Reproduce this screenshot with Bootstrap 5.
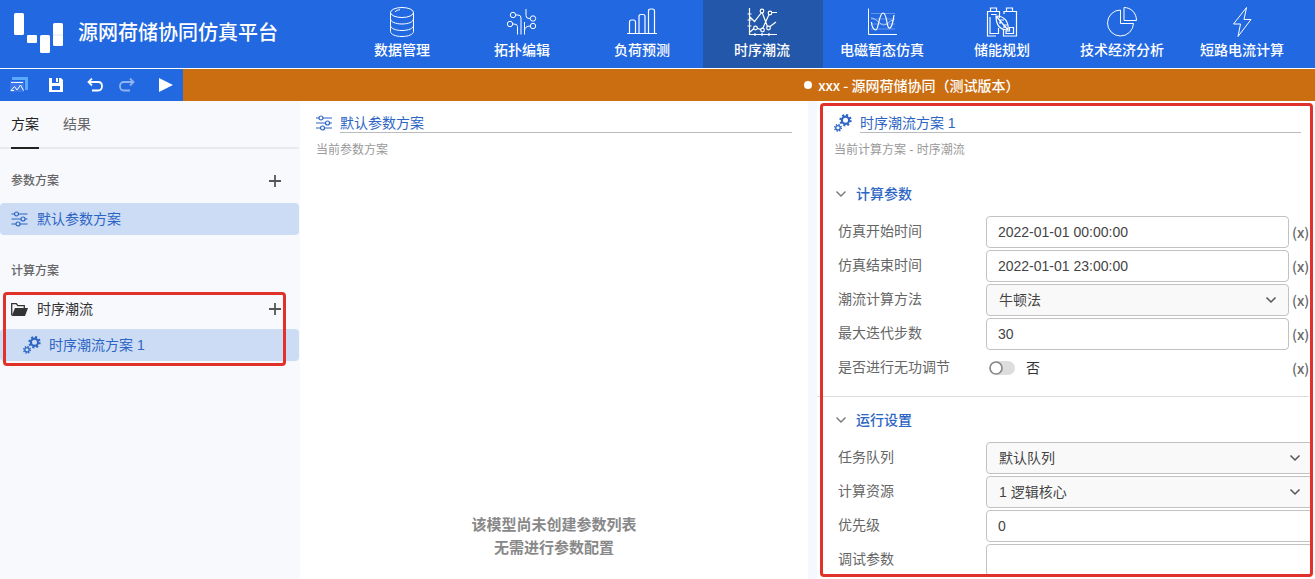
<!DOCTYPE html>
<html lang="zh-CN">
<head>
<meta charset="utf-8">
<meta name="viewport" content="width=device-width, initial-scale=1">
<title>源网荷储协同仿真平台</title>
<link href="https://cdn.jsdelivr.net/npm/bootstrap@5.3.0/dist/css/bootstrap.min.css" rel="stylesheet">
<style>
  :root { --app-blue: #2168e1; --app-link: #2d65c4; --app-side: #f8f9fd; --app-select: #ccdcf5; --app-mark: #e0322b; }
  body { font-family: "Liberation Sans", "Noto Sans CJK SC", sans-serif; font-size: 14px; line-height: 20px; color: #333; background: #fff; }
  svg { display: block; flex: none; fill: none; stroke: currentColor; }
  a { text-decoration: none; }

  .app-head { height: 69px; background: var(--app-blue); border-bottom: 1px solid #fff; }
  .app-brand { width: 343px; padding: 0 0 2px 13px; font-size: 20px; font-weight: 500; gap: 14px; }
  .app-modules .nav-link { width: 120px; height: 68px; padding: 6px 2px 0 0; color: #fff; font-weight: 500; font-size: 14px; border-radius: 0; }
  .app-modules .nav-link.active { background: #2257a9; }
  .app-modules svg { margin-bottom: 2px; }

  .app-bar { height: 32px; background: #cb6e11; }
  .app-tools { width: 183px; background: var(--app-blue); padding-left: 9px; }
  .app-tools button, .bare-btn { border: 0; background: none; padding: 0; color: inherit; }
  .lead-space { flex: 618; } .tail-space { flex: 294; }
  .file-name { font-family: "Noto Sans CJK SC", sans-serif; font-weight: 500; }
  .file-dot { width: 8px; height: 8px; margin-right: 6px; }

  .app-main { display: grid; grid-template-columns: 300px 51fr 9px 50fr; min-height: 0; }
  .side { background: var(--app-side); padding-right: 1px; }
  .side-tabs { height: 48px; border-bottom: 2px solid #e9eaed; padding-left: 11px; gap: 24px; }
  .side-tabs .nav-link { padding: 13px 0; height: 48px; color: #666; }
  .side-tabs .nav-link.active { color: #222; border-bottom: 2px solid #222; }
  .side-title { font-size: 12px; font-weight: 500; color: #666; height: 32px; margin-bottom: 6px; padding: 0 18px 0 11px; }
  .side-title.second { margin: 20px 0 6px; }
  .side-item { height: 32px; padding: 0 18px 0 11px; gap: 9px; color: #333; border-radius: 4px; }
  .side-item.picked { background: var(--app-select); color: var(--app-link); }
  .side-item.nested { padding-left: 23px; margin-top: 4px; gap: 8px; }
  .plus { color: #555; }
  .mark-frame { position: absolute; border: 3px solid var(--app-mark); border-radius: 4px; pointer-events: none; z-index: 2; }
  .side-mark { inset: -1px 13px -5px 3px; }
  .panel-mark { inset: 2px 2px 2px 3px; }

  .panel-head { padding: 11px 16px 0; }
  .name-line { color: var(--app-link); }
  .name-field { font-size: 14px; line-height: 20px; height: 21px; color: inherit; border: 0; border-bottom: 1px solid #bbb; border-radius: 0; padding: 0; background: none; }
  .panel-note { font-size: 12px; color: #999; margin: 7px 0 0; }
  .empty-note { font-size: 15px; line-height: 23px; font-weight: 700; color: #888; padding-bottom: 20px; }
  .gutter { background: #f6f8fd; }

  .setup { padding-right: 6px; }
  .setup .panel-head { padding: 11px 8px 11px 17px; }
  .fold { height: 45px; padding-left: 18px; gap: 9px; color: var(--app-link); font-weight: 500; font-size: 14px; }
  .fold svg { color: #777; }
  .fields { padding-left: 21px; gap: 2px; }
  .fields.wide { margin-right: -4px; }
  .field-row { height: 32px; }
  .field-row > label:first-child { width: 148px; flex: none; color: #666; padding-bottom: 2px; }
  .field-row .form-control, .field-row .form-select { height: 32px; font-size: 14px; line-height: 20px; color: #444; border: 1px solid #c2c2c2; border-radius: 4px; padding: 4px 11px 5px; }
  .field-row .form-select { padding-left: 12px; background-color: #f9f9f9; background-size: 12px 12px; background-position: right 11px center;
    background-image: url("data:image/svg+xml,%3csvg xmlns='http://www.w3.org/2000/svg' viewBox='0 0 12 12'%3e%3cpath fill='none' stroke='%23555' stroke-width='1.5' d='M1.5 3.5 6 8l4.500-4.500'/%3e%3c/svg%3e"); }
  .var-btn { width: 17px; margin-left: 3px; flex: none; font-family: "Noto Sans CJK SC", sans-serif; font-weight: 500; }
  .var-btn.bare-btn { color: #666; }
  .switch-input.form-check-input { width: 26px; height: 14px; margin: 0 11px 0 3px; border: 0; border-radius: 7px; background-color: #ddd; background-repeat: no-repeat; background-size: 14px 14px; background-position: left center;
    background-image: url("data:image/svg+xml,%3csvg xmlns='http://www.w3.org/2000/svg' viewBox='0 0 14 14'%3e%3ccircle cx='7' cy='7' r='6' fill='white' stroke='%23888' stroke-width='1.7'/%3e%3c/svg%3e"); }
  .switch-input.form-check-input:checked { background-position: right center; background-color: var(--app-blue); }
  .parting { height: 1px; background: #ddd; margin-top: 12px; }
</style>
</head>
<body class="vh-100 overflow-hidden d-flex flex-column">
<svg width="0" height="0" class="position-absolute" aria-hidden="true">
  <symbol id="i-sliders" viewBox="0 0 16 16"><g fill="none" stroke="currentColor" stroke-width="1.200"><path d="M0 3h3m4 0h9M0 8h9.500m4 0H16M0 13h4.500m4 0H16"/><circle cx="5" cy="3" r="2"/><circle cx="11.500" cy="8" r="2"/><circle cx="6.500" cy="13" r="2"/></g></symbol>
  <symbol id="i-gears" viewBox="0 0 18 18"><g fill="none" stroke="currentColor"><circle cx="11.500" cy="6.200" r="3.600" stroke-width="2.200"/><circle cx="11.500" cy="6.200" r="5.200" stroke-width="2" stroke-dasharray="2.040 2.040"/><circle cx="4" cy="13.800" r="2.200" stroke-width="1.300"/><circle cx="4" cy="13.800" r="3.400" stroke-width="1.300" stroke-dasharray="1.340 1.330"/></g></symbol>
  <symbol id="i-plus" viewBox="0 0 12 12"><path fill="none" stroke="currentColor" stroke-width="1.800" d="M6 0v12M0 6h12"/></symbol>
  <symbol id="i-down" viewBox="0 0 12 12"><path fill="none" stroke="currentColor" stroke-width="1.400" d="M1.500 3.500 6 8l4.500-4.500"/></symbol>
</svg>

<header class="app-head d-flex text-white flex-shrink-0 overflow-hidden">
  <div class="app-brand d-flex align-items-center flex-shrink-0">
    <svg width="51" height="42" viewBox="0 0 51 42"><g fill="#fff" stroke="none"><rect x="1" y="1" width="10" height="22" rx="1.500"/><rect x="14" y="23" width="10" height="8" rx="1"/><rect x="27" y="23" width="10" height="18" rx="1.500"/><rect x="40" y="11" width="10" height="23" rx="1.500"/></g><path d="M40 23h10" stroke="#c5d7f7" stroke-width=".6"/></svg>
    <span>源网荷储协同仿真平台</span>
  </div>
  <nav class="app-modules nav flex-nowrap">
    <a class="nav-link d-flex flex-column align-items-center" href="#"><svg width="32" height="32" viewBox="0 0 32 32"><ellipse cx="16" cy="6.500" rx="11.500" ry="5"/><path d="M4.500 6.500v19c0 2.800 5 5 11.500 5s11.500-2.200 11.500-5v-19M4.500 13c0 2.800 5 5 11.500 5s11.500-2.200 11.500-5M4.500 19.500c0 2.800 5 5 11.500 5s11.500-2.200 11.500-5M9 6c1-1.500 3-2 5-2.300"/></svg>数据管理</a>
    <a class="nav-link d-flex flex-column align-items-center" href="#"><svg width="32" height="32" viewBox="0 0 32 32"><circle cx="7" cy="9" r="2.700"/><circle cx="4" cy="18" r="2.700"/><circle cx="27" cy="12.500" r="2.700"/><circle cx="27" cy="20" r="2.700"/><path d="M9.700 9H12q3 0 3 3v16.500M6.700 18H8q3.500 0 3.500 2.500v8M20 3v6.500q0 3 3 3h1.500M18.500 28.500V16M18.500 25q0-5 6-5"/></svg>拓扑编辑</a>
    <a class="nav-link d-flex flex-column align-items-center" href="#"><svg width="32" height="32" viewBox="0 0 32 32" stroke-width="1.200"><path d="M1 27.500h30M3.500 27.500V16q0-2 2-2h2q2 0 2 2v11.500M13 27.500v-17q0-2 2-2h2q2 0 2 2v17M22.500 27.500V5q0-2 2-2h2q2 0 2 2v22.500"/></svg>负荷预测</a>
    <a class="nav-link active d-flex flex-column align-items-center" href="#"><svg width="32" height="32" viewBox="0 0 32 32" stroke-width="1.200"><path d="M3.500 2v26.500H31M1.500 8h4M1.500 14h4M1.500 20h4M9 27v3M16 27v3M23 27v3M4 11l4.500 4.500L16 6l6 16 8-6M4 26l5-4.500 7 2.500 7-15.500 2-2h6"/><g fill="#2257a9"><circle cx="16" cy="5" r="1.800"/><circle cx="9.500" cy="22" r="1.800"/><circle cx="16.500" cy="24" r="1.800"/><circle cx="24" cy="7" r="1.800"/><circle cx="22.500" cy="22" r="1.800"/></g></svg>时序潮流</a>
    <a class="nav-link d-flex flex-column align-items-center" href="#"><svg width="32" height="32" viewBox="0 0 32 32"><path d="M2.500 2.500v26H31"/><path d="M5 7.500h24M5 13h24M5 18h24M5 23h24" stroke-width=".5" opacity=".6"/><path d="M5.500 16c0 4 2 8 4.500 8S13 7 17 7s3.500 14 6 15 4-6 5-13" stroke-width="1.200"/><path d="M5 12c5 0 9 7 13 7s5-5 10-5" stroke-width=".6"/></svg>电磁暂态仿真</a>
    <a class="nav-link d-flex flex-column align-items-center" href="#"><svg width="32" height="32" viewBox="0 0 32 32" stroke-width="1.200"><path d="M4.500 5.500V2h6v3.500M20.500 5.500V2h6v3.500M10 30H1.500V5.500h12V12M18 8V5.500h12.500V30h-13v-7M5 8.500h5.500M4 11v16.500h8.500V22M27.500 21.500h-4V25H20v2.500h7.500z"/><path d="M10 10c8 0 13 5 12 14-8 0-12-5-12-14zM10 10l12 14M14 14v4M14 14h4M18 19v3M18 19h3"/></svg>储能规划</a>
    <a class="nav-link d-flex flex-column align-items-center" href="#"><svg width="32" height="32" viewBox="0 0 32 32"><path d="M14.500 4a13 13 0 1 0 13 13.500h-13z"/><path d="M18 1.500v13h12.500C30.500 7 25 1.500 18 1.500z"/></svg>技术经济分析</a>
    <a class="nav-link d-flex flex-column align-items-center" href="#"><svg width="32" height="32" viewBox="0 0 32 32"><path d="M20.500 1.500 7.500 18h7l-2.500 12.500L25 13.500h-7z" stroke-linejoin="round"/></svg>短路电流计算</a>
  </nav>
</header>

<div class="app-bar d-flex text-white flex-shrink-0">
  <div class="app-tools d-flex align-items-center flex-shrink-0">
    <button type="button" aria-label="应用"><svg width="20" height="18" viewBox="0 0 20 18"><path d="M3 1h16v13h-3V4H3z" fill="#59aaff" stroke="none"/><path d="M1 5h14v11H1z" fill="#3c78ec" stroke="none"/><path d="M2 6.500h12M2 14.500l3.500-4L8 14l3.500-5 3 5.500M2 14.500h3" stroke="#fff"/></svg></button>
    <button type="button" aria-label="保存" class="ms-3 ps-1"><svg width="14" height="14" viewBox="0 0 14 14"><path fill="#fff" stroke="none" fill-rule="evenodd" d="M0 0h3v5h7V0h2l2 2v12H0zM7 0h2v4H7zM3 8v4h8V8z"/></svg></button>
    <button type="button" aria-label="撤销" class="ms-4"><svg width="16" height="14" viewBox="0 0 16 14" stroke-width="1.800"><path d="M1.500 4H11q4 0 4 4.200T11 12.500H5M5 .5 1.500 4 5 7.500"/></svg></button>
    <button type="button" aria-label="重做" class="ms-3 opacity-50"><svg width="16" height="14" viewBox="0 0 16 14" stroke-width="1.800"><path d="M14.500 4H5Q1 4 1 8.200t4 4.300h6M11 .5 14.500 4 11 7.500"/></svg></button>
    <button type="button" aria-label="运行" class="ms-4"><svg width="14" height="14" viewBox="0 0 14 14"><path d="M0 0l14 7-14 7z" fill="#fff" stroke="none"/></svg></button>
  </div>
  <div class="lead-space"></div>
  <div class="file-name d-flex align-items-center flex-shrink-0 text-nowrap"><span class="file-dot bg-white rounded-circle"></span>xxx - 源网荷储协同（测试版本）</div>
  <div class="tail-space"></div>
</div>

<main class="app-main flex-grow-1">
  <aside class="side">
    <nav class="side-tabs nav">
      <a class="nav-link active" href="#">方案</a>
      <a class="nav-link" href="#">结果</a>
    </nav>
    <div class="side-title d-flex align-items-center justify-content-between mt-3">参数方案<button type="button" class="bare-btn plus" aria-label="新增参数方案"><svg width="12" height="12"><use href="#i-plus"/></svg></button></div>
    <a class="side-item picked d-flex align-items-center" href="#"><svg width="17" height="16"><use href="#i-sliders"/></svg>默认参数方案</a>
    <div class="side-title second d-flex align-items-center">计算方案</div>
    <div class="position-relative">
      <div class="side-item d-flex align-items-center"><svg width="17" height="13" viewBox="0 0 17 13"><path d="M.7 12.300V.7h4.600l1.500 2h6.500v2.500" stroke-width="1.300"/><path d="M4 5h13l-3 8H.7z" fill="#333" stroke="none"/></svg><span class="me-auto">时序潮流</span><button type="button" class="bare-btn plus" aria-label="新增计算方案"><svg width="12" height="12"><use href="#i-plus"/></svg></button></div>
      <a class="side-item nested picked d-flex align-items-center" href="#"><svg width="18" height="18"><use href="#i-gears"/></svg>时序潮流方案 1</a>
      <div class="mark-frame side-mark"></div>
    </div>
  </aside>

  <section class="d-flex flex-column">
    <div class="panel-head">
      <div class="name-line d-flex align-items-center"><svg width="16" height="16"><use href="#i-sliders"/></svg><input class="name-field form-control ms-2" aria-label="参数方案名称" value="默认参数方案"></div>
      <p class="panel-note">当前参数方案</p>
    </div>
    <div class="empty-note mt-auto text-center">该模型尚未创建参数列表<br>无需进行参数配置</div>
  </section>

  <div class="gutter"></div>

  <section class="setup position-relative overflow-hidden">
    <div class="panel-head">
      <div class="name-line d-flex align-items-center"><svg width="18" height="18"><use href="#i-gears"/></svg><input class="name-field form-control ms-2" aria-label="计算方案名称" value="时序潮流方案 1"></div>
      <p class="panel-note">当前计算方案 - 时序潮流</p>
    </div>
    <button type="button" class="fold bare-btn d-flex align-items-center w-100"><svg width="12" height="12"><use href="#i-down"/></svg>计算参数</button>
    <div class="fields d-flex flex-column">
      <div class="field-row d-flex align-items-center"><label for="t0">仿真开始时间</label><input id="t0" class="form-control" value="2022-01-01 00:00:00"><button type="button" class="bare-btn var-btn">(x)</button></div>
      <div class="field-row d-flex align-items-center"><label for="t1">仿真结束时间</label><input id="t1" class="form-control" value="2022-01-01 23:00:00"><button type="button" class="bare-btn var-btn">(x)</button></div>
      <div class="field-row d-flex align-items-center"><label for="alg">潮流计算方法</label><select id="alg" class="form-select"><option>牛顿法</option></select><button type="button" class="bare-btn var-btn">(x)</button></div>
      <div class="field-row d-flex align-items-center"><label for="iter">最大迭代步数</label><input id="iter" class="form-control" value="30"><button type="button" class="bare-btn var-btn">(x)</button></div>
      <div class="field-row d-flex align-items-center"><label for="reg">是否进行无功调节</label><input id="reg" type="checkbox" role="switch" class="form-check-input switch-input"><span class="me-auto">否</span><button type="button" class="bare-btn var-btn">(x)</button></div>
    </div>
    <div class="parting"></div>
    <button type="button" class="fold bare-btn d-flex align-items-center w-100"><svg width="12" height="12"><use href="#i-down"/></svg>运行设置</button>
    <div class="fields wide d-flex flex-column">
      <div class="field-row d-flex align-items-center"><label for="queue">任务队列</label><select id="queue" class="form-select"><option>默认队列</option></select></div>
      <div class="field-row d-flex align-items-center"><label for="core">计算资源</label><select id="core" class="form-select"><option>1 逻辑核心</option></select></div>
      <div class="field-row d-flex align-items-center"><label for="prio">优先级</label><input id="prio" class="form-control" value="0"></div>
      <div class="field-row d-flex align-items-center"><label for="debug">调试参数</label><input id="debug" class="form-control"></div>
    </div>
    <div class="mark-frame panel-mark"></div>
  </section>
</main>
<script src="https://cdn.jsdelivr.net/npm/bootstrap@5.3.0/dist/js/bootstrap.bundle.min.js"></script>
</body>
</html>
